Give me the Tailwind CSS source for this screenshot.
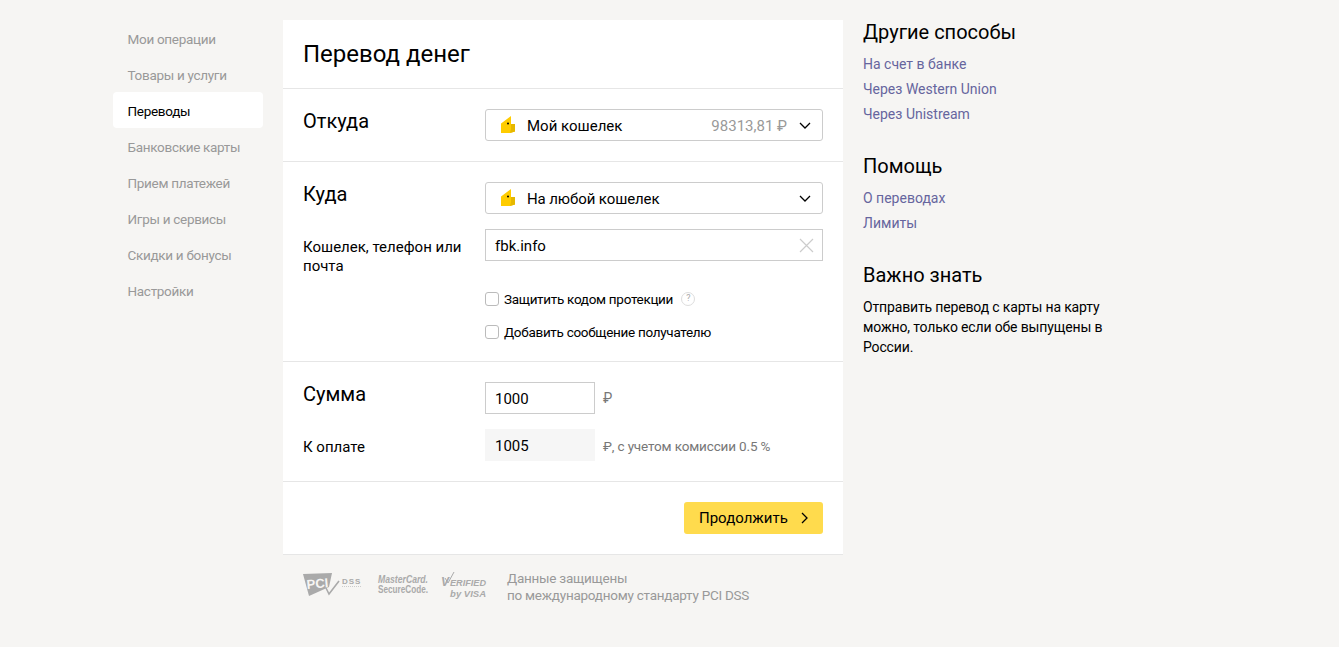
<!DOCTYPE html>
<html lang="ru">
<head>
    <meta charset="UTF-8">
    <title>Перевод денег</title>
    <script src="https://cdn.jsdelivr.net/npm/@tailwindcss/browser@4"></script>
</head>
<body class="bg-[#f6f5f3] font-['Roboto',sans-serif] text-black h-[647px] overflow-hidden">
<div class="flex items-start pl-[113px] pt-[20px]">

    <!-- Left menu -->
    <nav class="w-[150px] mr-[20px] text-[13.5px] tracking-[-0.3px] text-[#999]">
        <a class="flex items-center h-[36px] pl-[14.5px] pt-[2px]">Мои операции</a>
        <a class="flex items-center h-[36px] pl-[14.5px] pt-[2px]">Товары и услуги</a>
        <a class="flex items-center h-[36px] pl-[14.5px] pt-[2px] bg-white rounded text-black">Переводы</a>
        <a class="flex items-center h-[36px] pl-[14.5px] pt-[2px]">Банковские карты</a>
        <a class="flex items-center h-[36px] pl-[14.5px] pt-[2px]">Прием платежей</a>
        <a class="flex items-center h-[36px] pl-[14.5px] pt-[2px]">Игры и сервисы</a>
        <a class="flex items-center h-[36px] pl-[14.5px] pt-[2px]">Скидки и бонусы</a>
        <a class="flex items-center h-[36px] pl-[14.5px] pt-[2px]">Настройки</a>
    </nav>

    <!-- Main -->
    <div class="w-[560px]">
        <div class="bg-white">
            <div class="h-[69px] border-b border-[#e6e6e6] px-[20px] flex items-center">
                <h1 class="text-[24px] leading-none">Перевод денег</h1>
            </div>

            <div class="h-[73px] border-b border-[#e6e6e6] px-[20px] pt-[20px] flex">
                <div class="w-[182px] text-[20px] leading-[24px]">Откуда</div>
                <div class="w-[338px] h-[32px] border border-[#ccc] rounded-[3px] flex items-center pl-[15px] pr-[11px] text-[15px]">
                    <svg class="w-[15px] h-[18px] mr-[11px] shrink-0" viewBox="0 0 15 18"><path d="M0 7.5 L10 0 V8 H14 V15.5 L9 17 H0Z" fill="#fc0"/><path d="M10 8 H14 V15.5 L9 17 L10 13Z" fill="#e6b800"/><circle cx="7" cy="7.5" r="1" fill="#000"/></svg>
                    <span class="pt-[2px]">Мой кошелек</span>
                    <span class="ml-auto pt-[2px] text-[#999]">98313,81 ₽</span>
                    <svg class="w-[12px] h-[7px] ml-[12px]" viewBox="0 0 12 7" fill="none" stroke="#000" stroke-width="1.3"><path d="M1 1l5 5 5-5"/></svg>
                </div>
            </div>

            <div class="h-[200px] border-b border-[#e6e6e6] px-[20px] pt-[20px]">
                <div class="flex mb-[15px]">
                    <div class="w-[182px] text-[20px] leading-[24px]">Куда</div>
                    <div class="w-[338px] h-[32px] border border-[#ccc] rounded-[3px] flex items-center pl-[15px] pr-[11px] text-[15px]">
                        <svg class="w-[15px] h-[18px] mr-[11px] shrink-0" viewBox="0 0 15 18"><path d="M0 7.5 L10 0 V8 H14 V15.5 L9 17 H0Z" fill="#fc0"/><path d="M10 8 H14 V15.5 L9 17 L10 13Z" fill="#e6b800"/><circle cx="7" cy="7.5" r="1" fill="#000"/></svg>
                        <span class="pt-[2px] tracking-[-0.1px]">На любой кошелек</span>
                        <svg class="w-[12px] h-[7px] ml-auto" viewBox="0 0 12 7" fill="none" stroke="#000" stroke-width="1.3"><path d="M1 1l5 5 5-5"/></svg>
                    </div>
                </div>
                <div class="flex">
                    <div class="w-[182px] text-[15px] leading-[19px] pt-[9px] pr-[10px]">Кошелек, телефон или почта</div>
                    <div class="w-[338px] h-[32px] border border-[#ccc] flex items-center pl-[9px] pr-[8px] text-[15px]">
                        <span class="pt-[2px]">fbk.info</span>
                        <svg class="w-[15px] h-[15px] ml-auto" viewBox="0 0 15 15" fill="none" stroke="#ccc" stroke-width="1.2"><path d="M1 1l13 13M14 1L1 14"/></svg>
                    </div>
                </div>
                <div class="ml-[182px] mt-[12px] text-[13.5px] tracking-[-0.3px]">
                    <div class="flex items-center h-[22px]">
                        <span class="w-[14px] h-[14px] border border-[#bbb] rounded-[3px] mr-[5px]"></span>
                        <span>Защитить кодом протекции</span>
                        <span class="w-[14px] h-[14px] ml-[8px] border border-[#ddd] rounded-full text-[9px] text-[#aaa] flex items-center justify-center">?</span>
                    </div>
                    <div class="flex items-center h-[22px] mt-[11px]">
                        <span class="w-[14px] h-[14px] border border-[#bbb] rounded-[3px] mr-[5px]"></span>
                        <span>Добавить сообщение получателю</span>
                    </div>
                </div>
            </div>

            <div class="h-[120px] border-b border-[#e6e6e6] px-[20px] pt-[20px]">
                <div class="flex mb-[15px]">
                    <div class="w-[182px] text-[20px] leading-[24px]">Сумма</div>
                    <div class="w-[110px] h-[32px] border border-[#ccc] flex items-center pl-[9px] pt-[2px] text-[15px]">1000</div>
                    <span class="ml-[8px] text-[14px] leading-[32px] text-[#777]">₽</span>
                </div>
                <div class="flex">
                    <div class="w-[182px] text-[15px] leading-[36px]">К оплате</div>
                    <div class="w-[110px] h-[32px] bg-[#f6f6f6] flex items-center pl-[10px] pt-[2px] text-[15px]">1005</div>
                    <span class="ml-[8px] text-[13.5px] tracking-[-0.15px] leading-[34px] text-[#777]">₽, с учетом комиссии 0.5 %</span>
                </div>
            </div>

            <div class="h-[73px] border-b border-[#e6e6e6] px-[20px] pb-[1px] flex items-center justify-end">
                <button class="w-[139px] h-[32px] bg-[#ffdb4d] rounded-[3px] text-[15px] flex items-center pl-[15px] pt-[2px]">
                    Продолжить
                    <svg class="w-[7px] h-[12px] ml-[13px] -mt-[2px]" viewBox="0 0 7 12" fill="none" stroke="#000" stroke-width="1.3"><path d="M1 1l5 5-5 5"/></svg>
                </button>
            </div>
        </div>

        <!-- Footer logos -->
        <div class="flex items-start pl-[20px] pt-[15px] text-[#999]">
            <svg class="w-[60px] h-[25px] mt-[3px] mr-[15px] overflow-visible" viewBox="0 0 60 25">
                <path d="M0 1 L29 0 L26 14 L6 23Z" fill="#aaa"/>
                <text x="4" y="16" font-family="Liberation Sans" font-weight="700" font-size="13" fill="#f6f5f3" transform="rotate(-5 4 16)">PCI</text>
                <path d="M23 15l3 6 10-13" fill="none" stroke="#aaa" stroke-width="1.6"/>
                <text x="39" y="11" font-family="Liberation Sans" font-weight="700" font-size="8" letter-spacing="1" fill="#aaa">DSS</text>
                <path d="M39 13.5h19" stroke="#ccc" stroke-width="1" stroke-dasharray="1 1"/>
            </svg>
            <svg class="w-[52px] h-[22px] mt-[4px] mr-[11px] overflow-visible" viewBox="0 0 52 22">
                <text x="0" y="9" font-family="Liberation Sans" font-weight="700" font-style="italic" font-size="10" textLength="50" lengthAdjust="spacingAndGlyphs" fill="#aaa">MasterCard.</text>
                <text x="0" y="19" font-family="Liberation Sans" font-weight="700" font-size="10" textLength="50" lengthAdjust="spacingAndGlyphs" fill="#aaa">SecureCode.</text>
            </svg>
            <svg class="w-[47px] h-[26px] mt-[2px] mr-[19px] overflow-visible" viewBox="0 0 47 26">
                <path d="M4 6l3 5 6-11" fill="none" stroke="#aaa" stroke-width="1"/>
                <text x="0" y="14" font-family="Liberation Sans" font-weight="700" font-style="italic" font-size="12" fill="#aaa">V</text>
                <text x="9" y="14" font-family="Liberation Sans" font-weight="700" font-style="italic" font-size="9.5" textLength="36" lengthAdjust="spacingAndGlyphs" fill="#aaa">ERIFIED</text>
                <text x="45" y="25" text-anchor="end" font-family="Liberation Sans" font-weight="700" font-style="italic" font-size="9.5" fill="#aaa">by VISA</text>
            </svg>
            <div class="text-[13.5px] tracking-[-0.25px] leading-[17px]">Данные защищены<br>по международному стандарту PCI DSS</div>
        </div>
    </div>

    <!-- Right column -->
    <aside class="w-[250px] ml-[20px] text-[14px]">
        <h2 class="text-[20px] leading-[24px]">Другие способы</h2>
        <div class="mt-[8px] text-[#66659e]">
            <a class="block h-[25px] leading-[25px]">На счет в банке</a>
            <a class="block h-[25px] leading-[25px]">Через Western Union</a>
            <a class="block h-[25px] leading-[25px]">Через Unistream</a>
        </div>
        <h2 class="text-[20px] leading-[24px] mt-[27px]">Помощь</h2>
        <div class="mt-[8px] text-[#66659e]">
            <a class="block h-[25px] leading-[25px]">О переводах</a>
            <a class="block h-[25px] leading-[25px]">Лимиты</a>
        </div>
        <h2 class="text-[20px] leading-[24px] mt-[27px]">Важно знать</h2>
        <p class="mt-[10px] leading-[20px] tracking-[-0.15px]">Отправить перевод с карты на карту можно, только если обе выпущены в России.</p>
    </aside>
</div>
</body>
</html>
